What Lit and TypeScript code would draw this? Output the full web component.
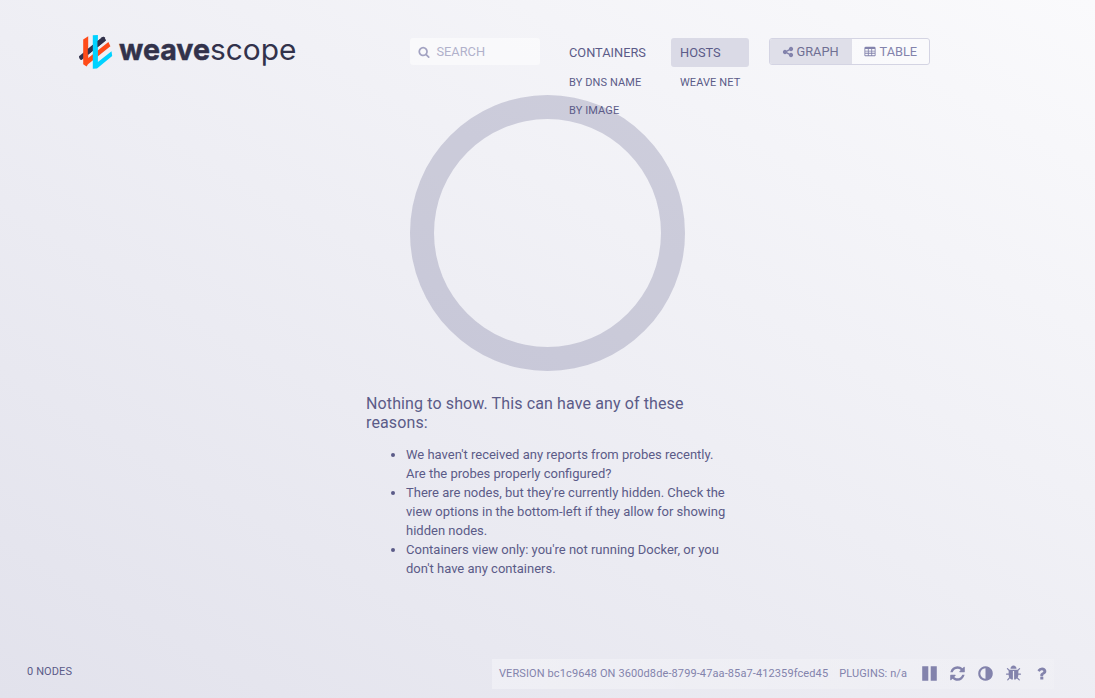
import { LitElement, html, css, svg } from "lit";
import { customElement, property } from "lit/decorators.js";

const ICONS: Record<string, string> = {
  search:
    "M1216 832q0-185-131.5-316.5t-316.5-131.5-316.5 131.5-131.5 316.5 131.5 316.5 316.5 131.5 316.5-131.5 131.5-316.5zm512 832q0 52-38 90t-90 38q-54 0-90-38l-343-342q-179 124-399 124-143 0-273.5-55.5t-225-150-150-225-55.5-273.5 55.5-273.5 150-225 225-150 273.5-55.5 273.5 55.5 225 150 150 225 55.5 273.5q0 220-124 399l343 343q37 37 37 90z",
  share:
    "M1344 1024q133 0 226.5 93.5t93.5 226.5-93.5 226.5-226.5 93.5-226.5-93.5-93.5-226.5q0-12 2-34l-360-180q-92 86-218 86-133 0-226.5-93.5t-93.5-226.5 93.5-226.5 226.5-93.5q126 0 218 86l360-180q-2-22-2-34 0-133 93.5-226.5t226.5-93.5 226.5 93.5 93.5 226.5-93.5 226.5-226.5 93.5q-126 0-218-86l-360 180q2 22 2 34t-2 34l360 180q92-86 218-86z",
  table:
    "M224 128h1344q66 0 113 47t47 113v1088q0 66-47 113t-113 47h-1344q-66 0-113-47t-47-113v-1088q0-66 47-113t113-47zM192 448v256h384v-256zM704 448v256h384v-256zM1216 448v256h384v-256zM192 832v192h384v-192zM704 832v192h384v-192zM1216 832v192h384v-192zM192 1152v224h384v-224zM704 1152v224h384v-224zM1216 1152v224h384v-224z",
  pause: "M128 128h640v1536h-640zM1024 128h640v1536h-640z",
  refresh:
    "M1639 1056q0 5-1 7-64 268-268 434.5t-478 166.5q-146 0-282.5-55t-243.5-157l-129 129q-19 19-45 19t-45-19-19-45v-448q0-26 19-45t45-19h448q26 0 45 19t19 45-19 45l-137 137q71 66 161 102t187 36q134 0 250-65t186-179q11-17 53-117 8-23 30-23h192q13 0 22.5 9.5t9.5 22.5zm25-800v448q0 26-19 45t-45 19h-448q-26 0-45-19t-19-45 19-45l138-138q-148-137-349-137-134 0-250 65t-186 179q-11 17-53 117-8 23-30 23h-199q-13 0-22.5-9.5t-9.5-22.5v-7q65-268 270-434.5t480-166.5q146 0 284 55.5t245 156.5l130-129q19-19 45-19t45 19 19 45z",
  adjust:
    "M896 1440v-1088q-148 0-273 73t-198 198-73 273 73 273 198 198 273 73zm768-544q0 209-103 385.5t-279.5 279.5-385.5 103-385.5-103-279.5-279.5-103-385.5 103-385.5 279.5-279.5 385.5-103 385.5 103 279.5 279.5 103 385.5z",
  bug:
    "M1696 960q0 26-19 45t-45 19h-224q0 171-67 290l208 209q19 19 19 45t-19 45q-18 19-45 19t-45-19l-198-197q-5 5-15 13t-42 28.5-65 36.5-82 29-97 13v-896h-128v896q-51 0-101.5-13.5t-87-33-66-39-43.5-32.5l-15-14-183 207q-20 21-48 21-24 0-43-16-19-18-20.5-44.5t15.5-46.5l202-227q-58-114-58-274h-224q-26 0-45-19t-19-45 19-45 45-19h224v-294l-173-173q-19-19-19-45t19-45 45-19 45 19l173 173h844l173-173q19-19 45-19t45 19 19 45-19 45l-173 173v294h224q26 0 45 19t19 45zm-480-576h-640q0-133 93.5-226.5t226.5-93.5 226.5 93.5 93.5 226.5z",
  question:
    "M1088 1256v240q0 16-12 28t-28 12h-240q-16 0-28-12t-12-28v-240q0-16 12-28t28-12h240q16 0 28 12t12 28zm316-600q0 54-15.5 101t-35 76.5-55 59.5-57.5 43.5-61 35.5q-41 23-68.5 65t-27.5 67q0 17-12 32.5t-28 15.5h-240q-15 0-25.5-18.5t-10.5-37.5v-45q0-83 65-156.5t143-108.5q59-27 84-56t25-76q0-42-46.5-74t-107.5-32q-65 0-108 29-35 25-107 115-13 16-31 16-12 0-25-8l-164-125q-13-10-15.5-25t5.5-28q160-266 464-266 80 0 161 31t146 83 106 127.5 41 158.5z",
};

@customElement("scope-icon")
class ScopeIcon extends LitElement {
  @property() name = "search";
  static styles = css`
    :host { display: block; flex: none; }
    .glyph { display: block; width: 100%; height: 100%; fill: currentColor; fill-rule: evenodd; }
  `;
  render() {
    return html`<svg class="glyph" viewBox="0 0 1792 1792">${svg`<path d=${ICONS[this.name]}></path>`}</svg>`;
  }
}

@customElement("scope-logo")
class ScopeLogo extends LitElement {
  static styles = css`
    :host { display: block; width: 220px; height: 40px; }
    .logo { display: block; }
    .bold { font: 700 29.5px Inter, sans-serif; fill: #32324b; stroke: #32324b; stroke-width: .5px; }
    .light { font: 400 29.5px Inter, sans-serif; fill: #32324b; }
  `;
  render() {
    return html`<svg class="logo" width="220" height="40" viewBox="78 32 220 40">
      <path fill="#32324b" d="M79 56.2 102.3 37.2Q103.5 36.3 104.6 37.6L105.8 40.5 81.6 60Q79 59.5 79 56.2Z"></path>
      <path fill="#ff4b19" d="M83.2 39.4 88.2 36.2V58L108.4 41.9 110.4 46.2 88 64.3 86.6 66.6 83.2 64.2Z"></path>
      <path fill="#32324b" d="M87.8 48.9 98 40.6V46.4L87.8 54.8Z"></path>
      <path fill="#00d2ff" d="M92.8 35.2 97.9 35V62L111.5 51.2 112.2 56 97 68.6 92.8 68.8Z"></path>
      <path fill="#32324b" d="M97.5 41.1 102.3 37.2Q103.5 36.3 104.6 37.6L105.8 40.5 97.5 47.2Z"></path>
      <text class="bold" x="119" y="60" textLength="91" lengthAdjust="spacingAndGlyphs">weave</text>
      <text class="light" x="210" y="60" textLength="86.5" lengthAdjust="spacingAndGlyphs">scope</text>
    </svg>`;
  }
}

@customElement("app-root")
class AppRoot extends LitElement {
  static styles = css`
    :host {
      display: flex; flex-direction: column; box-sizing: border-box;
      width: 100vw; height: 100vh; overflow: hidden;
      font-family: Roboto, sans-serif; font-size: 13px; color: #5b5b88;
      background: linear-gradient(30deg, #e2e2ec 0%, #fafafc 100%);
    }
    .header { display: flex; align-items: flex-start; height: 95px; flex: none; position: relative; z-index: 1; box-sizing: border-box; padding-left: 78px; }
    .logo { margin-top: 32px; }
    .search {
      display: flex; align-items: center; gap: 6.5px; box-sizing: border-box;
      width: 130px; height: 27px; margin: 38px 0 0 112px; padding-left: 8px;
      border-radius: 3px; background: rgba(255, 255, 255, .5); color: #b1b1cb; font-size: 12.8px;
    }
    .search scope-icon { width: 12px; height: 12px; color: #a3a3c2; }
    .topic { margin: 38px 0 0 20px; width: 91px; }
    .topic.hosts { width: 78px; }
    .main { height: 29px; line-height: 29px; padding-left: 9px; border-radius: 3px; font-size: 12.8px; }
    .main.active { background: #dadae6; }
    .sub { height: 28px; line-height: 31px; padding-left: 9px; font-size: 11px; letter-spacing: .1px; white-space: nowrap; }
    .modes { display: flex; box-sizing: border-box; height: 27px; margin: 38px 0 0 20px; width: 161px; border: 1px solid #d4d4e3; border-radius: 3px; overflow: hidden; color: #8383ac; }
    .mode { display: flex; align-items: center; gap: 3px; box-sizing: border-box; padding-left: 12px; flex: 1; background: rgba(255, 255, 255, .35); font-size: 12.8px; }
    .mode.active { flex: none; width: 81.5px; padding-left: 11.5px; background: #dfdfe9; color: #6f6f93; }
    .mode + .mode { gap: 4px; }
    .mode scope-icon { width: 12px; height: 12px; color: #8383ac; }
    .content { flex: 1; min-height: 0; display: flex; flex-direction: column; align-items: center; }
    .ring { width: 275px; height: 276px; box-sizing: border-box; border: 24px solid rgba(91, 91, 136, .25); border-radius: 50%; flex: none; }
    .message { width: 363px; margin-top: 23px; }
    .title { font-size: 16px; line-height: 19px; width: 340px; letter-spacing: .12px; }
    .reasons { margin: 13px 0 0; padding-left: 40px; line-height: 19px; width: 323px; }
    .footer { display: flex; justify-content: space-between; align-items: center; height: 30px; flex: none; margin-bottom: 9px; padding: 0 42px 0 27px; font-size: 11px; letter-spacing: .11px; }
    .nodes { padding-bottom: 5px; }
    .status { display: flex; align-items: center; box-sizing: border-box; width: 562px; margin-right: -1px; height: 30px; padding: 0 0 2px 7px; color: #8383ac; background: linear-gradient(90deg, rgba(255, 255, 255, .32), rgba(255, 255, 255, .1)); }
    .plugins { margin-left: 11px; }
    .tools { display: flex; gap: 11px; margin-left: 14px; }
    .tools scope-icon { width: 17px; height: 17px; }
  `;
  render() {
    return html`
      <header class="header">
        <scope-logo class="logo"></scope-logo>
        <div class="search"><scope-icon name="search"></scope-icon><span>SEARCH</span></div>
        <div class="topic">
          <div class="main">CONTAINERS</div>
          <div class="sub">BY DNS NAME</div>
          <div class="sub">BY IMAGE</div>
        </div>
        <div class="topic hosts">
          <div class="main active">HOSTS</div>
          <div class="sub">WEAVE NET</div>
        </div>
        <div class="modes">
          <div class="mode active"><scope-icon name="share"></scope-icon><span>GRAPH</span></div>
          <div class="mode"><scope-icon name="table"></scope-icon><span>TABLE</span></div>
        </div>
      </header>
      <main class="content">
        <div class="ring"></div>
        <div class="message">
          <div class="title">Nothing to show. This can have any of these reasons:</div>
          <ul class="reasons">
            <li>We haven't received any reports from probes recently. Are the probes properly configured?</li>
            <li>There are nodes, but they're currently hidden. Check the view options in the bottom-left if they allow for showing hidden nodes.</li>
            <li>Containers view only: you're not running Docker, or you don't have any containers.</li>
          </ul>
        </div>
      </main>
      <footer class="footer">
        <div class="nodes">0 NODES</div>
        <div class="status">
          <span>VERSION bc1c9648 ON 3600d8de-8799-47aa-85a7-412359fced45</span>
          <span class="plugins">PLUGINS: n/a</span>
          <div class="tools">
            ${["pause", "refresh", "adjust", "bug", "question"].map((n) => html`<scope-icon name=${n}></scope-icon>`)}
          </div>
        </div>
      </footer>
    `;
  }
}
